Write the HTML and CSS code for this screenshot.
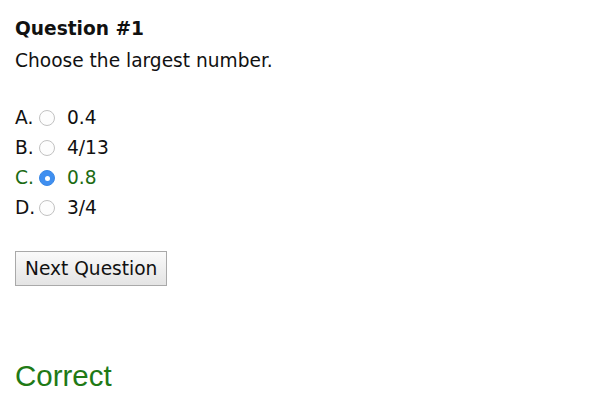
FILE: index.html
```html
<!DOCTYPE html>
<html>
<head>
<meta charset="utf-8">
<link rel="stylesheet" href="styles.css">
</head>
<body>
<div class="quiz">
  <div class="title">Question #1</div>
  <div class="prompt">Choose the largest number.</div>
  <ul class="options">
    <li class="opt"><span class="letter">A.</span><span class="radio"></span><span class="val">0.4</span></li>
    <li class="opt"><span class="letter">B.</span><span class="radio"></span><span class="val">4/13</span></li>
    <li class="opt correct"><span class="letter">C.</span><span class="radio checked"></span><span class="val">0.8</span></li>
    <li class="opt"><span class="letter">D.</span><span class="radio"></span><span class="val">3/4</span></li>
  </ul>
  <button class="next">Next Question</button>
  <div class="result">Correct</div>
</div>
</body>
</html>
```
FILE: styles.css
```css
html, body { margin: 0; padding: 0; background: #fff; }
body { font-family: "DejaVu Sans", Verdana, sans-serif; font-size: 18.6px; color: #111; }
.quiz { padding: 14px 15px 13px; }
.title { font-weight: bold; line-height: 30px; }
.prompt { line-height: 33px; }
.options { list-style: none; margin: 25px 0 0; padding: 0; }
.opt { display: flex; align-items: center; height: 30px; }
.letter { width: 24px; }
.radio { width: 16px; height: 16px; border-radius: 50%; border: 1px solid #c2c2c2; box-sizing: border-box; background: #fdfdfd; margin: 2px 12px 0 0; position: relative; }
.radio.checked { background: #3f8ff0; border-color: #3a88e6; }
.radio.checked::after { content: ""; position: absolute; left: 50%; top: 50%; width: 5px; height: 5px; margin: -2.5px 0 0 -2.5px; border-radius: 50%; background: #fff; }
.correct { color: #1c6b13; }
.next { display: block; margin-top: 29px; font-family: "DejaVu Sans", Verdana, sans-serif; font-size: 18.6px; color: #111; height: 35px; padding: 0 9px; border: 1px solid #a9a9a9; background: linear-gradient(#fafafa, #e4e4e4); border-radius: 0; }
.result { margin-top: 73px; font-family: "Liberation Sans", Arial, sans-serif; font-size: 29.5px; color: #1f7a16; }
```
